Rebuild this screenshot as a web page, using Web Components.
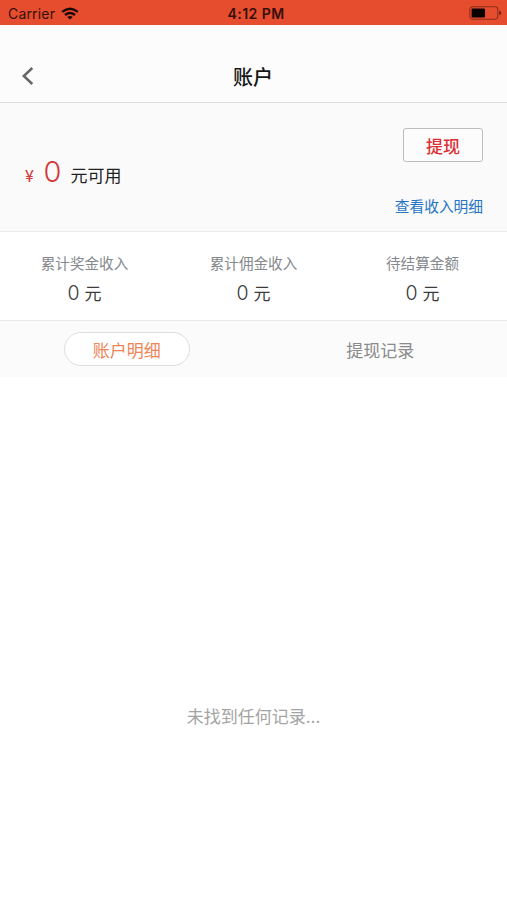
<!DOCTYPE html>
<html lang="zh-CN">
<head>
<meta charset="utf-8">
<title>账户</title>
<style>
html,body{margin:0;height:100%;background:#fff}
body{font-family:Inter,"Noto Sans CJK SC",sans-serif;color:#222}
</style>
</head>
<body>
<account-page></account-page>
<script>
const define = (name, html) => customElements.define(name, class extends HTMLElement {
  constructor() {
    super();
    this.attachShadow({ mode: 'open' }).innerHTML = html;
  }
});

define('status-bar', `
<style>
:host{display:grid;grid-template-columns:1fr auto 1fr;align-items:center;height:25px;box-sizing:border-box;padding:2px 5px 0 8px;background:#e64d2e;color:#35100a;font-size:14px;line-height:20px}
.left{display:flex;align-items:center;gap:6px}
.carrier{letter-spacing:.18px}
.time{font-weight:600;font-size:14px;letter-spacing:.45px;margin:1px 0 0 2px}
.battery{justify-self:end;margin-top:-1px}
svg{display:block}
.wifi{margin-top:-1px}
</style>
<div class="left"><span class="carrier">Carrier</span>
<svg class="wifi" width="18" height="13" viewBox="0 0 18 13" fill="none" stroke="#1c0804" stroke-width="2.4"><path d="M1.2 4.9Q9-1.5 16.8 4.9M4 8Q9 4 14 8"/><path d="M6.2 9.9Q9 7.9 11.8 9.9L9 12.6z" fill="#1c0804" stroke="none"/></svg></div>
<span class="time">4:12 PM</span>
<svg class="battery" width="33" height="14" viewBox="0 0 33 14"><rect x=".8" y=".8" width="28" height="12.4" rx="3.2" fill="none" stroke="#8f2c1b" stroke-width="1.1"/><rect x="2.6" y="2.6" width="13.4" height="8.8" rx="1" fill="#080201"/><path d="M30.2 4.7Q32.4 5.6 32.4 7T30.2 9.3z" fill="#6d2114"/></svg>`);

define('nav-bar', `
<style>
:host{display:grid;grid-template-columns:1fr auto 1fr;align-items:center;height:78px;box-sizing:border-box;padding:25px 22px 0 21px;background:#fcfcfc;border-bottom:1px solid #dedede}
h1{margin:4px 0 0;font-size:20px;line-height:30px;font-weight:500;color:#161616}
svg{display:block}
</style>
<svg width="13" height="20" viewBox="0 0 13 20" fill="none" stroke="#666" stroke-width="2.5"><path d="M11.3 2L2.8 10l8.5 8"/></svg>
<h1><slot></slot></h1><span></span>`);

define('balance-panel', `
<style>
:host{display:flex;justify-content:space-between;height:129px;box-sizing:border-box;padding:25px 24px 0 25px;background:#fafafa;border-bottom:1px solid #ebebeb}
.amount{display:flex;align-items:baseline;padding-top:23px;height:42px;line-height:42px}
.yen{font-size:16px;color:#d33b3b;width:18.5px}
.num{font-size:29px;font-weight:350;color:#d33b3b;width:27px}
.unit{font-size:17px;color:#222}
.side{display:flex;flex-direction:column;align-items:flex-end}
button{width:80px;height:34px;box-sizing:border-box;padding:2px 0 0;background:#fcfcfc;border:1px solid #bdbdbd;border-radius:3px;font:500 17px/30px Inter,"Noto Sans CJK SC",sans-serif;color:#dc2f35}
button span{display:block;padding-top:1px}
a{margin-top:34px;font-size:14.7px;line-height:22px;color:#2474c4}
</style>
<div class="amount"><span class="yen">¥</span><span class="num">0</span><span class="unit">元可用</span></div>
<div class="side"><button><span>提现</span></button><a>查看收入明细</a></div>`);

define('stat-cell', `
<style>
:host{display:block;text-align:center}
.label{font-size:14.6px;line-height:22px;color:#85898e}
.value{font-size:17px;line-height:26px;margin-top:5px;color:#3b3b3b}
.value b{font-weight:350;font-size:19.5px}
</style>
<div class="label"><slot></slot></div><div class="value"><b>0</b> 元</div>`);

define('stat-row', `
<style>
:host{display:grid;grid-template-columns:repeat(3,1fr);height:89px;box-sizing:border-box;padding-top:21px;background:#fff;border-bottom:1px solid #e8e8e8}
</style><slot></slot>`);

define('tab-item', `
<style>
:host{display:flex;justify-content:center}
span{display:block;width:126px;height:34px;box-sizing:border-box;padding-top:2px;border:1px solid transparent;border-radius:17px;text-align:center;font-size:17px;line-height:32px;color:#8b8b8b}
:host([active]) span{background:#fff;border-color:#dedede;color:#ee8557}
</style><span><slot></slot></span>`);

define('tab-bar', `
<style>
:host{display:grid;grid-template-columns:1fr 1fr;height:56px;box-sizing:border-box;padding-top:11px;background:#fbfbfb}
</style><slot></slot>`);

define('empty-state', `
<style>
:host{display:flex;flex:1;justify-content:center;padding-top:327px;font-size:17px;line-height:26px;color:#a4a4a4}
</style><span><slot></slot></span>`);

define('account-page', `
<style>
:host{display:flex;flex-direction:column;height:100vh;overflow:hidden;background:#fff}
</style>
<status-bar></status-bar>
<nav-bar>账户</nav-bar>
<balance-panel></balance-panel>
<stat-row><stat-cell>累计奖金收入</stat-cell><stat-cell>累计佣金收入</stat-cell><stat-cell>待结算金额</stat-cell></stat-row>
<tab-bar><tab-item active>账户明细</tab-item><tab-item>提现记录</tab-item></tab-bar>
<empty-state>未找到任何记录...</empty-state>`);
</script>
</body>
</html>
